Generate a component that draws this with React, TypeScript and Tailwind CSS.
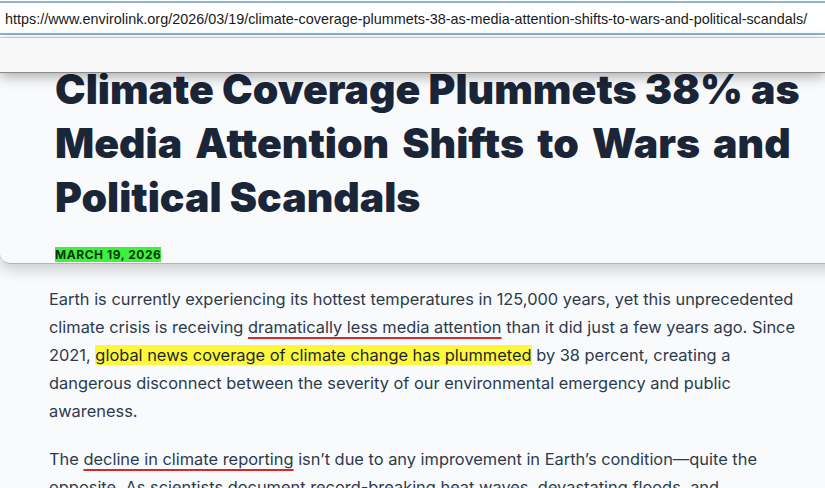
export default function App() {
  const url =
    'https://www.envirolink.org/2026/03/19/climate-coverage-plummets-38-as-media-attention-shifts-to-wars-and-political-scandals/';

  return (
    <div className="min-h-screen w-full overflow-hidden bg-[#f8fafc] font-['Inter',sans-serif]">
      {/* address bar */}
      <div className="bg-white pt-[1px]">
        <div className="flex h-[34px] items-center border-y-[2px] border-[#8fb2d4] px-[5px] pt-[3px]">
          <span className="whitespace-nowrap font-['Liberation_Sans',Arial,sans-serif] text-[14.4px] text-[#1a1a1a]">
            {url}
          </span>
        </div>
        <div className="h-[3px] border-b border-[#d6d6d6] bg-white" />
      </div>

      {/* sticky header strip */}
      <div className="relative z-10 h-[34px] bg-[#f8f8f9] shadow-[0_1px_0_#8a8a8a,0_4px_14px_rgba(0,0,0,0.35)]" />

      {/* title card */}
      <div className="-mt-[10px] mr-[-20px] rounded-bl-[10px] border-b border-[#b4b4b4] bg-[#f9fafb] shadow-[0_6px_14px_rgba(0,0,0,0.18)]">
        <div className="pl-[55px] pr-[20px]">
          <h1 className="whitespace-nowrap text-[41px] font-black leading-[54px] text-[#1b2538]">
            Climate Coverage Plummets 38% as
            <br />
            <span className="[word-spacing:0.12em]">Media Attention Shifts to Wars and</span>
            <br />
            Political Scandals
          </h1>
          <div className="mt-[23px] flex pb-[1px]">
            <span className="bg-[#3ef23c] text-[12px] font-bold leading-[15px] tracking-[0.045em] text-[#0d3312]">
              MARCH 19, 2026
            </span>
          </div>
        </div>
      </div>

      {/* article body */}
      <div className="pl-[49px] pr-[28px] pt-[21px] text-[16.4px] leading-[28px] text-[#2e3a4b]">
        <p className="mb-[20px]">
          Earth is currently experiencing its hottest temperatures in 125,000 years, yet this unprecedented
          climate crisis is receiving{' '}
          <span className="underline decoration-[#dc2626] decoration-2 underline-offset-[4px]">
            dramatically less media attention
          </span>{' '}
          than it did just a few years ago. Since 2021,{' '}
          <mark className="bg-[#fdf93a] text-[#1f2633]">global news coverage of climate change has plummeted</mark>{' '}
          by 38 percent, creating a dangerous disconnect between the severity of our environmental emergency and
          public awareness.
        </p>
        <p>
          The{' '}
          <span className="underline decoration-[#dc2626] decoration-2 underline-offset-[4px]">
            decline in climate reporting
          </span>{' '}
          isn’t due to any improvement in Earth’s condition—quite the opposite. As scientists document
          record-breaking heat waves, devastating floods, and unprecedented wildfires, newsrooms have turned their
          attention elsewhere.
        </p>
      </div>
    </div>
  );
}
